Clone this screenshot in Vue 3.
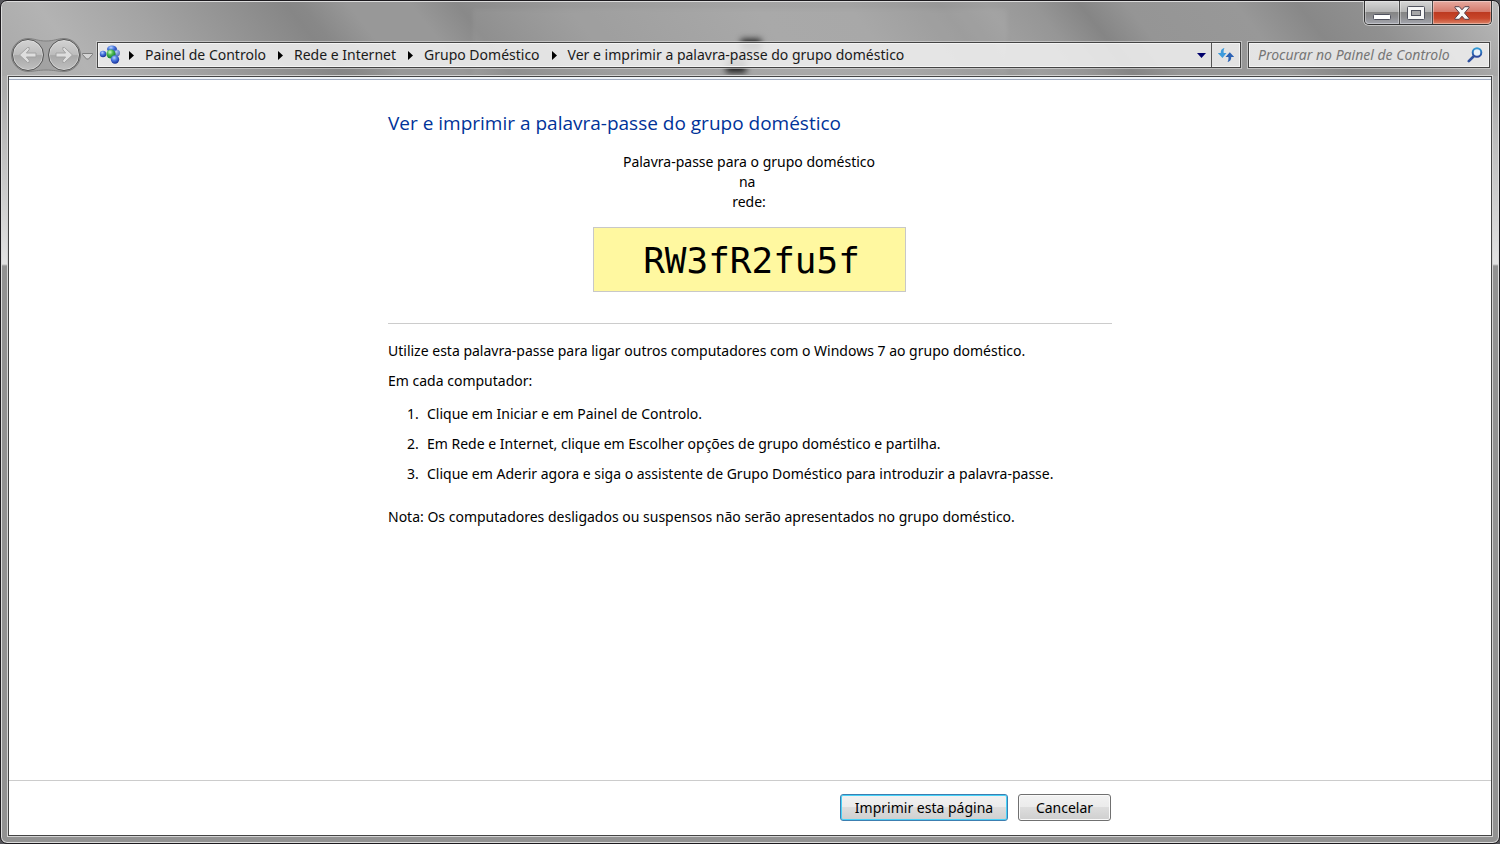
<script setup>
import { ref } from 'vue'

const crumbs = ['Painel de Controlo', 'Rede e Internet', 'Grupo Doméstico', 'Ver e imprimir a palavra-passe do grupo doméstico']
const steps = [
  'Clique em Iniciar e em Painel de Controlo.',
  'Em Rede e Internet, clique em Escolher opções de grupo doméstico e partilha.',
  'Clique em Aderir agora e siga o assistente de Grupo Doméstico para introduzir a palavra-passe.',
]
const query = ref('')
</script>

<template>
  <div class="window">
    <div class="glass" aria-hidden="true">
      <div class="streaks"></div>
      <div class="pane"></div>
      <div class="smudge upper"></div>
      <div class="smudge lower"></div>
    </div>

    <header class="chrome">
      <div class="caption">
        <div class="caption-buttons">
          <button type="button" class="cap min" aria-label="Minimizar">
            <svg width="18" height="6" viewBox="0 0 18 6"><rect x="0.5" y="0.5" width="17" height="5" rx="1" fill="#fff" stroke="#50525e" /></svg>
          </button>
          <button type="button" class="cap max" aria-label="Maximizar">
            <svg width="18" height="14" viewBox="0 0 18 14">
              <rect x="0.5" y="0.5" width="17" height="13" rx="1" fill="#f6f6f6" stroke="#50525e" />
              <rect x="4.5" y="4.5" width="9" height="5" fill="#a6a6a8" stroke="#50525e" />
            </svg>
          </button>
          <button type="button" class="cap close" aria-label="Fechar">
            <svg width="16" height="14" viewBox="0 0 16 14">
              <path d="M1 .7h4.3L8 3.8 10.7.7H15v1L10.500 7l4.500 5.300v1h-4.300L8 10.200l-2.700 3.100H1v-1L5.500 7 1 1.700z" fill="#f8f8f8" stroke="#57404a" stroke-linejoin="round" />
            </svg>
          </button>
        </div>
      </div>

      <div class="navbar">
        <div class="travel">
          <svg class="travel-plate" width="72" height="36" viewBox="0 0 72 36" aria-hidden="true">
            <path d="M18 1.500c6 0 10 2.500 18 2.500s12-2.500 18-2.500a16.500 16.500 0 0 1 0 33c-6 0-10-1.500-18-1.500s-12 1.500-18 1.500a16.500 16.500 0 0 1 0-33z" fill="#999" fill-opacity=".55" stroke="#808080" />
          </svg>
          <button type="button" class="round" aria-label="Retroceder">
            <svg width="20" height="18" viewBox="0 0 20 18"><path d="M9.500 1.500h1.700v2.200L8.400 7H18v4H8.400l2.800 3.300v2.200H9.500L1.500 9z" fill="#dedede" stroke="#a2a2a2" stroke-linejoin="round" /></svg>
          </button>
          <button type="button" class="round" aria-label="Avançar">
            <svg width="20" height="18" viewBox="0 0 20 18"><path d="M10.500 1.500H8.800v2.200L11.600 7H2v4h9.600l-2.800 3.300v2.200h1.700l8-7.500z" fill="#dedede" stroke="#a2a2a2" stroke-linejoin="round" /></svg>
          </button>
        </div>
        <button type="button" class="recent" aria-label="Páginas recentes">
          <svg width="11" height="7" viewBox="0 0 11 7"><path d="M.5.500h10v1L6.500 6h-2L.500 1.500z" fill="#d4d4d4" stroke="#7d7d7d" /></svg>
        </button>

        <nav class="address" aria-label="Endereço">
          <svg class="place" width="22" height="20" viewBox="0 0 22 20" aria-hidden="true">
            <defs>
              <radialGradient id="ball-blue" cx=".4" cy=".3" r=".7"><stop offset="0" stop-color="#b9d4ff" /><stop offset=".45" stop-color="#4c7ae0" /><stop offset="1" stop-color="#16309c" /></radialGradient>
              <radialGradient id="ball-green" cx=".4" cy=".3" r=".7"><stop offset="0" stop-color="#d0ffc8" /><stop offset=".45" stop-color="#48b850" /><stop offset="1" stop-color="#14762c" /></radialGradient>
            </defs>
            <ellipse cx="13" cy="4" rx="5" ry="3.500" fill="url(#ball-blue)" />
            <circle cx="17.500" cy="8" r="3.500" fill="url(#ball-blue)" opacity=".65" />
            <circle cx="4" cy="9" r="3.200" fill="url(#ball-blue)" />
            <circle cx="12" cy="9" r="4.600" fill="url(#ball-green)" />
            <circle cx="16" cy="14.500" r="4.200" fill="url(#ball-blue)" />
          </svg>
          <ol class="crumbs">
            <li v-for="c in crumbs" :key="c">
              <svg class="tri" width="5" height="9" viewBox="0 0 5 9" aria-hidden="true"><path d="M0 0l5 4.500L0 9z" /></svg>
              <a href="#">{{ c }}</a>
            </li>
          </ol>
          <button type="button" class="drop" aria-label="Localizações anteriores">
            <svg width="9" height="5" viewBox="0 0 9 5"><path d="M0 0h9L4.500 5z" fill="#00006c" /></svg>
          </button>
          <button type="button" class="refresh" aria-label="Atualizar">
            <svg width="18" height="16" viewBox="0 0 18 16">
              <path d="M7.500 1C4.500 1.500 3.800 3.500 3.800 6H.800l4.700 5 4-5H6.700C6.500 4 6.700 2.200 7.500 1z" fill="#3d9bdc" />
              <path d="M10.500 15c3-.5 3.700-2.500 3.700-5h3L12.800 5.200 8.500 10h2.900c.2 2 0 3.800-.9 5z" fill="#2c62b4" />
            </svg>
          </button>
        </nav>

        <label class="search">
          <input v-model="query" type="text" placeholder="Procurar no Painel de Controlo" aria-label="Procurar no Painel de Controlo" />
          <svg width="16" height="16" viewBox="0 0 16 16" aria-hidden="true">
            <defs><linearGradient id="lens" x1="0" y1="0" x2="0" y2="1"><stop offset="0" stop-color="#2f9ad6" /><stop offset="1" stop-color="#2b449c" /></linearGradient></defs>
            <circle cx="10" cy="5.500" r="4.300" fill="#e9f1f8" stroke="url(#lens)" stroke-width="2" />
            <path d="M6.500 9.500L1.800 14.200" stroke="#31529f" stroke-width="2.600" stroke-linecap="round" />
          </svg>
        </label>
      </div>
    </header>

    <div class="client">
      <main class="page">
        <h1>Ver e imprimir a palavra-passe do grupo doméstico</h1>
        <section class="key">
          <p class="intro">Palavra-passe para o grupo doméstico<br />na&nbsp;<br />rede:</p>
          <div class="password">RW3fR2fu5f</div>
        </section>
        <hr />
        <p class="use">Utilize esta palavra-passe para ligar outros computadores com o Windows 7 ao grupo doméstico.</p>
        <p class="each">Em cada computador:</p>
        <ol class="steps">
          <li v-for="(s, i) in steps" :key="s"><span>{{ i + 1 }}.</span>{{ s }}</li>
        </ol>
        <p class="note">Nota: Os computadores desligados ou suspensos não serão apresentados no grupo doméstico.</p>
      </main>
      <footer class="actions">
        <div class="actions-inner">
          <button type="button" class="btn primary">Imprimir esta página</button>
          <button type="button" class="btn">Cancelar</button>
        </div>
      </footer>
    </div>
  </div>
</template>

<style>
body {
  background: #55555a;
}
</style>

<style scoped>
* {
  box-sizing: border-box;
}
button {
  margin: 0;
  padding: 0;
  border: 0;
  background: none;
  font: inherit;
  color: inherit;
}
svg {
  display: block;
  flex: none;
}
.window {
  position: relative;
  display: flex;
  flex-direction: column;
  min-height: 100vh;
  padding: 0 6px 5px;
  border: 1px solid #1c1a1e;
  border-radius: 7px;
  overflow: hidden;
  box-shadow: inset 0 0 0 1px #dcdcdc;
  background: linear-gradient(#a8a8a8 0, #adadad 90px, #e2e2e2 263px, #929292 265px, #929292 100%);
  font-family: "Noto Sans", "Open Sans", sans-serif;
  font-size: 14px;
  line-height: 20px;
  color: #000;
}
.glass {
  position: absolute;
  top: 1px;
  left: 1px;
  right: 1px;
  height: 74px;
  overflow: hidden;
  border-radius: 5px 5px 0 0;
}
.streaks {
  position: absolute;
  top: 0;
  bottom: 0;
  left: -60px;
  right: 0;
  transform: skewX(38deg);
  transform-origin: top;
  background: linear-gradient(90deg, #a8a8a8 0, #b3b3b3 6%, #a4a4a4 12%, #959595 17%, #868686 22%, #888 23%, #989898 26%, #989898 30%, #898989 33%, #909090 36%, #999 40%, #a4a4a4 52%, #a3a3a3 58%, #979797 64%, #9e9e9e 67%, #969696 70%, #858585 73%, #959595 76%, #989898 83%, #888 87%, #909090 91%, #b0b0b0 98%, #bbb 100%);
}
.pane {
  position: absolute;
  top: 7px;
  bottom: 0;
  left: 31.500%;
  right: 32.800%;
  background: rgba(255, 255, 255, 0.06);
  filter: blur(2px);
}
.smudge {
  position: absolute;
  background: #222;
  filter: blur(3px);
}
.smudge.upper {
  left: 49.400%;
  top: 37px;
  width: 20px;
  height: 12px;
}
.smudge.lower {
  left: 48.400%;
  top: 57px;
  width: 20px;
  height: 14px;
}
.chrome {
  position: relative;
}
.caption {
  display: flex;
  justify-content: flex-end;
  height: 37px;
  padding-right: 1px;
}
.caption-buttons {
  display: flex;
  height: 24px;
  border: 1px solid #333;
  border-top: 0;
  border-radius: 0 0 5px 5px;
  box-shadow: 0 0 0 1px rgba(230, 230, 230, 0.6);
}
.cap {
  display: grid;
  place-items: center;
  height: 23px;
  box-shadow: inset 0 0 0 1px rgba(255, 255, 255, 0.35);
  background: linear-gradient(#d6d6d6 0, #b4b4b4 48%, #858585 50%, #8d8d90 70%, #a4a6ae 100%);
}
.cap.min {
  width: 35px;
  padding-top: 9px;
  border-right: 1px solid #4a4a4a;
  border-radius: 0 0 0 4px;
}
.cap.max {
  width: 33px;
  border-right: 1px solid #4a4a4a;
}
.cap.close {
  width: 58px;
  border-radius: 0 0 4px 0;
  background: linear-gradient(#e6aaa0 0, #d4796a 48%, #bd3a20 50%, #c8462a 75%, #dc8468 100%);
}
.navbar {
  display: flex;
  align-items: center;
  height: 38px;
  padding: 0 3px 4px;
}
.travel {
  position: relative;
  display: flex;
  gap: 4px;
  padding: 2px;
}
.travel-plate {
  position: absolute;
  top: 0;
  left: 0;
}
.round {
  position: relative;
  display: grid;
  place-items: center;
  width: 32px;
  height: 32px;
  border: 1px solid #555;
  border-radius: 50%;
  background: linear-gradient(#d2d2d2 0, #bdbdbd 48%, #a8a8a8 52%, #c0c0c0 100%);
  box-shadow: inset 0 0 0 1px rgba(235, 235, 235, 0.55);
}
.recent {
  width: 11px;
  margin: 2px 4px 0 0;
}
.address,
.search {
  display: flex;
  align-items: center;
  height: 26px;
  border: 1px solid #444;
  box-shadow: 0 0 0 1px rgba(220, 220, 220, 0.6), inset 0 0 0 1px #f4f4f4;
  background: rgba(238, 238, 238, 0.88);
}
.address {
  flex: 1;
  min-width: 0;
}
.place {
  margin: 0 1px;
}
.crumbs {
  display: flex;
  flex: 1;
  min-width: 0;
  margin: 0;
  padding: 0;
  list-style: none;
  overflow: hidden;
  white-space: nowrap;
}
.crumbs li {
  display: flex;
  align-items: center;
  margin-right: 5px;
}
.tri {
  margin: 0 11px 0 7px;
}
.crumbs a {
  color: #1a1a1a;
  text-decoration: none;
}
.drop {
  display: grid;
  place-items: center;
  width: 20px;
  height: 24px;
}
.refresh {
  display: grid;
  place-items: center;
  width: 29px;
  height: 24px;
  border-left: 1px solid #555;
}
.search {
  width: 242px;
  margin-left: 7px;
  padding: 0 6px 0 9px;
}
.search input {
  flex: 1;
  min-width: 0;
  padding: 0;
  border: 0;
  outline: 0;
  background: none;
  font: inherit;
  font-style: italic;
}
.search input::placeholder {
  color: #767676;
  opacity: 1;
}
.client {
  position: relative;
  display: flex;
  flex: 1;
  flex-direction: column;
  margin: 0 1px 2px;
  border: 1px solid #444;
  box-shadow: 0 0 0 1px #d4d4d4, inset 0 2px 0 #eef3f8, inset 0 3px 0 #9faabf;
  background: #fff;
}
.page {
  flex: 1;
  width: 100%;
  max-width: 724px;
  margin: 0 auto;
  padding-top: 34px;
}
h1 {
  margin: 0 0 17px;
  font-family: "Open Sans", "Noto Sans", sans-serif;
  font-size: 19px;
  line-height: 24px;
  font-weight: 400;
  color: #039;
}
p {
  margin: 0;
}
.key {
  padding-right: 2px;
}
.intro {
  margin-bottom: 15px;
  text-align: center;
}
.password {
  width: 313px;
  margin: 0 auto 31px;
  padding: 3px 0 0 5px;
  border: 1px solid #c8c8c8;
  background: #fff8a0;
  font-family: "DejaVu Sans Mono", monospace;
  font-size: 36px;
  line-height: 60px;
  text-align: center;
}
hr {
  margin: 0 0 17px;
  border: 0;
  border-top: 1px solid #ccc;
}
.use {
  margin-bottom: 10px;
}
.each {
  margin-bottom: 13px;
}
.steps {
  margin: 0 0 23px;
  padding: 0;
  list-style: none;
}
.steps li {
  display: flex;
  margin-bottom: 10px;
}
.steps span {
  width: 20px;
  margin-left: 19px;
}
.actions {
  border-top: 1px solid #ccc;
  padding: 13px 0 14px;
}
.actions-inner {
  display: flex;
  justify-content: flex-end;
  gap: 10px;
  max-width: 724px;
  margin: 0 auto;
  padding-right: 1px;
}
.btn {
  width: 93px;
  height: 27px;
  border: 1px solid #707070;
  border-radius: 3px;
  box-shadow: inset 0 0 0 1px #fafafa;
  background: linear-gradient(#f2f2f2 0, #ebebeb 50%, #ddd 50%, #cfcfcf 100%);
}
.btn.primary {
  width: 168px;
  border-color: #3c7fb1;
  box-shadow: inset 0 0 0 1px #48d2f8;
}
</style>
